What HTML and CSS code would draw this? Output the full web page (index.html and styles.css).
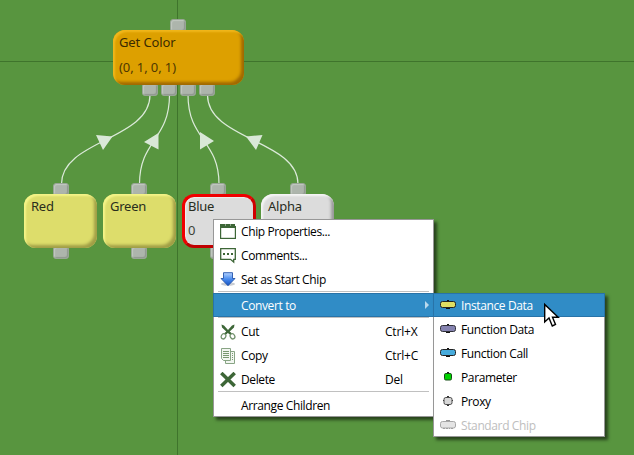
FILE: index.html
```html
<!DOCTYPE html>
<html lang="en">
<head>
<meta charset="utf-8">
<title>Chip editor</title>
<link rel="stylesheet" href="styles.css">
</head>
<body>
<main class="canvas">
  <svg class="wires" width="634" height="455" viewBox="0 0 634 455">
    <path class="grid" d="M177.5 0V455M0 61.5H634"/>
    <g class="wire">
      <path d="M61.5 184C61.5 140 150 140 150 95"/>
      <path d="M139.5 184C139.5 140 169.500 140 169.500 95"/>
      <path d="M219 184C219 140 188 140 188 95"/>
      <path d="M298 184C298 140 207.500 140 207.500 95"/>
    </g>
    <path class="arrow" d="M96 135L112.500 136.500L103 150ZM144 142L158.500 133V149.500ZM200 132L214 141L200 149.500ZM246 136.500L262.500 135L256 150Z"/>
  </svg>

  <i class="port p-out"></i>
  <i class="port p-in1"></i><i class="port p-in2"></i><i class="port p-in3"></i><i class="port p-in4"></i>
  <i class="port p-red"></i><i class="port p-red low"></i>
  <i class="port p-green"></i><i class="port p-green low"></i>
  <i class="port p-blue"></i><i class="port p-blue low"></i>
  <i class="port p-alpha"></i>

  <section class="chip color"><span>Get Color</span><span class="value">(0, 1, 0, 1)</span></section>
  <section class="chip red"><span>Red</span></section>
  <section class="chip green"><span>Green</span></section>
  <section class="chip blue"><span>Blue</span><span class="value">0</span></section>
  <section class="chip alpha"><span>Alpha</span></section>

  <nav class="menu main-menu">
    <div class="item"><svg class="icon" viewBox="0 0 16 16"><path fill="#3d6637" d="M0 0H15V2H16V15H0Z"/><path fill="#fff" d="M1.200 4H14.800V13.800H1.200Z"/><path fill="#8da889" d="M5 0h1v2H5zM10 0h1v2h-1z"/></svg><span>Chip Properties...</span></div>
    <div class="item"><svg class="icon" viewBox="0 0 16 16"><path fill="#fff" stroke="#3d6637" stroke-width="1.300" d="M.7 .7H15.300V11.300H13.700V14L10.500 11.300H.7Z"/><path fill="#3d6637" d="M3 5h2v2H3zM7 5h2v2H7zM11 5h2v2h-2z"/></svg><span>Comments...</span></div>
    <div class="item"><svg class="icon" viewBox="0 0 16 16"><defs><linearGradient id="down" x2="0" y2="1"><stop stop-color="#b5d3ff"/><stop offset=".5" stop-color="#478aee"/><stop offset="1" stop-color="#1650bd"/></linearGradient></defs><ellipse cx="8" cy="12" rx="7" ry="1.800" fill="#c9cdd3"/><path fill="url(#down)" stroke="#2455ac" stroke-width=".9" d="M3.500 .7H12.500V6.500H15L8 13.700L1 6.500H3.500Z"/></svg><span>Set as Start Chip</span></div>
    <hr>
    <div class="item active"><span class="indent">Convert to</span><svg class="more" width="4" height="8" viewBox="0 0 4 8"><path d="M0 0L4 4L0 8Z" fill="#b9d9ed"/></svg></div>
    <hr class="after">
    <div class="item"><svg class="icon" viewBox="0 0 16 16"><path fill="#3d6637" d="M1.500 .5L4 1.500L8 6L12 1.500L14.500 .5L14 3.500L9.700 7.500L12 9.500L10.500 11L7.800 9L5.500 11L4 9.500L6.300 7.500L2 3.500Z"/><g fill="#fff" stroke="#6f8f6a" stroke-width="1.300"><ellipse cx="3.500" cy="12.300" rx="2.200" ry="2.700" transform="rotate(30 3.500 12.300)"/><ellipse cx="12.500" cy="12.300" rx="2.200" ry="2.700" transform="rotate(-30 12.500 12.300)"/></g></svg><span>Cut</span><kbd>Ctrl+X</kbd></div>
    <div class="item"><svg class="icon" viewBox="0 0 16 16"><g fill="#f2f6f1" stroke="#88a484"><path d="M5.500 3.500H14.500V15.500H5.500Z"/><path d="M1.500 .5H10.500V12.500H3.500L1.500 10.500Z"/></g><path stroke="#78976f" d="M3 3.500H9M3 5.500H9M3 7.500H9M3 9.500H9M12 5.500h1M12 7.500h1M12 9.500h1M12 11.500h1"/></svg><span>Copy</span><kbd>Ctrl+C</kbd></div>
    <div class="item"><svg class="icon" viewBox="0 0 16 16"><path stroke="#3d6637" stroke-width="3.500" d="M1.300 1L14.700 14M14.700 1L1.300 14"/></svg><span>Delete</span><kbd>Del</kbd></div>
    <hr>
    <div class="item last"><span class="indent">Arrange Children</span></div>
  </nav>

  <nav class="menu sub-menu">
    <div class="item active"><svg class="icon" viewBox="0 0 16 16"><path fill="#111" d="M7 3h2v2H7zM4 10h8v1H4zM6 11h4v1H6z"/><rect x=".5" y="4.500" width="15" height="6" rx="2" fill="#dede63" stroke="#222"/></svg><span>Instance Data</span></div>
    <div class="item"><svg class="icon" viewBox="0 0 16 16"><path fill="#111" d="M7 3h2v2H7zM4 10h8v1H4zM6 11h4v1H6z"/><rect x=".5" y="4.500" width="15" height="6" rx="2" fill="#8583b0" stroke="#303038"/></svg><span>Function Data</span></div>
    <div class="item"><svg class="icon" viewBox="0 0 16 16"><path fill="#111" d="M7 3h2v2H7zM4 10h8v1H4zM6 11h4v1H6z"/><rect x=".5" y="4.500" width="15" height="6" rx="2" fill="#47abdc" stroke="#222"/></svg><span>Function Call</span></div>
    <div class="item"><svg class="icon" viewBox="0 0 16 16"><path fill="#222" d="M7 3h2v2H7z"/><rect x="4.500" y="4.500" width="7" height="6.500" rx="1.300" fill="#00d400" stroke="#164c16"/></svg><span>Parameter</span></div>
    <div class="item"><svg class="icon" viewBox="0 0 16 16"><path fill="#333" d="M7 3h2v2H7zM7 11h2v2H7zM3 7h10v1H3z"/><rect x="4" y="4.500" width="8" height="7" rx="1.800" fill="#d8d8d8" stroke="#4a4a4a"/></svg><span>Proxy</span></div>
    <div class="item disabled"><svg class="icon" viewBox="0 0 16 16"><path fill="#999" d="M6 3h4v2H6zM3 11h2v1H3zM6 11h2v1H6zM9 11h1v1H9zM11 11h2v1h-2z"/><rect x=".5" y="4.500" width="15" height="6.500" rx="2" fill="#e4e4e4" stroke="#a7a7a7"/></svg><span>Standard Chip</span></div>
  </nav>

  <svg class="cursor" width="17" height="26" viewBox="0 0 17 26"><path fill="#fff" stroke="#000" stroke-width="1.400" stroke-linejoin="miter" d="M1.700 2.500V20L6 16L9.300 24L12.500 22.500L9.500 15.300H15.200Z"/></svg>
</main>
</body>
</html>
```

FILE: styles.css
```css
body {
  margin: 0;
  font: 12px/24px "Open Sans", "Noto Sans", sans-serif;
  color: #000;
}

.canvas {
  position: relative;
  width: 634px;
  height: 455px;
  overflow: hidden;
  background: #58953f;
}

.wires { display: block; }
.grid { stroke: #3f742c; fill: none; }
.wire { fill: none; stroke: #dceada; stroke-width: 1.2; }
.arrow { fill: #d9e8d7; }

/* Chips and their ports sit freely on the canvas */
.port {
  position: absolute;
  top: 183px;
  width: 16px;
  height: 13px;
  box-sizing: border-box;
  border-radius: 3px;
  background: #adb5ac;
  border: 1px solid #98a595;
  box-shadow: inset 1px 1px 1px #c1c8c0, inset -1px -1px 1px #8f978e;
}
.p-out { left: 170px; top: 19px; }
.p-in1, .p-in2, .p-in3, .p-in4 { top: 83px; }
.p-in1 { left: 142px; }
.p-in2 { left: 161px; }
.p-in3 { left: 180px; }
.p-in4 { left: 199px; }
.p-red { left: 53px; }
.p-green { left: 131px; }
.p-blue { left: 210px; }
.p-alpha { left: 290px; }
.low { top: 246px; }

.chip {
  position: absolute;
  top: 194px;
  width: 73px;
  height: 54px;
  box-sizing: border-box;
  padding: 0 7px;
  border-radius: 12px;
  display: flex;
  flex-direction: column;
  font: 13px/24px "Noto Sans", sans-serif;
  letter-spacing: -0.25px;
  color: #292d1d;
}
.color {
  left: 113px;
  top: 30px;
  width: 131px;
  height: 55px;
  padding: 0 6px;
  background: #dda000;
  box-shadow: inset 2px 2px 2px #f1b71b, inset -3px -3px 3px #a06900;
  color: #3b2b00;
  letter-spacing: -0.1px;
}
.color .value { margin-top: 1px; }
.red, .green {
  background: #dddd6b;
  box-shadow: inset 2px 2px 2px #f4f488, inset -3px -3px 3px #a09e46;
}
.red { left: 24px; }
.green { left: 103px; }
.blue {
  left: 182px;
  width: 74px;
  padding: 0 3px;
  border: 3px solid #f00000;
  border-right-color: #d00000;
  border-bottom-color: #c00000;
  background: #dcdcdc;
  box-shadow: inset 1px 1px 1px #efefef;
}
.blue span:first-child { margin-top: -3px; }
.alpha {
  left: 261px;
  background: #dcdcdc;
  box-shadow: inset 2px 2px 2px #f5f5f5, inset -3px -3px 3px #999;
}
.value { opacity: .88; }

.menu {
  position: absolute;
  box-sizing: border-box;
  border: 1px solid #979797;
  background: #fff;
  box-shadow: 3px 3px 3px rgba(0, 0, 0, .55);
}
.main-menu { left: 213px; top: 219px; width: 221px; height: 198px; }
.sub-menu { left: 433px; top: 293px; width: 172px; height: 144px; }
.sub-menu .item:first-child { margin-top: -1px; }

.item {
  display: flex;
  align-items: center;
  height: 24px;
  padding-left: 6px;
  letter-spacing: -0.38px;
  white-space: nowrap;
}
.icon { width: 16px; height: 16px; margin-right: 5px; flex: none; }
.indent { margin-left: 21px; }
.item kbd {
  width: 48px;
  margin-left: auto;
  font: inherit;
  letter-spacing: -0.2px;
}
.active {
  box-sizing: border-box;
  margin: 0 -1px;
  padding: 0 6px;
  border: 1px solid #2873a8;
  background: #308cc6;
  color: #fff;
}
.sub-menu .item span { padding-top: 2px; }
.more { margin: 0 -2px 0 auto; }
.main-menu .active span { padding-top: 2px; }
.disabled { color: #bebebe; }

.menu hr {
  height: 1px;
  margin: -1px 4px 1px;
  border: 0;
  background: #c0c0c0;
}
.main-menu .active { margin-top: 1px; }
.menu .after { margin: 0 4px 2px; }
.last { height: 23px; margin-top: 2px; }

.cursor {
  position: absolute;
  left: 543px;
  top: 302px;
}
```
